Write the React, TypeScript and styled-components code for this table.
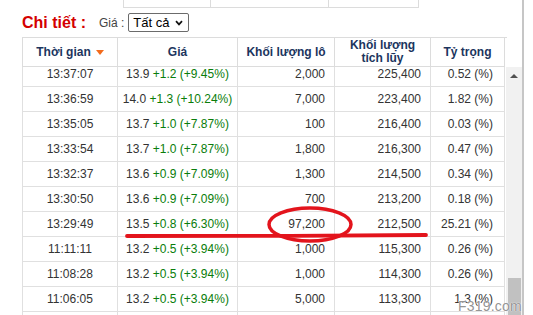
import React from 'react';
import styled, { createGlobalStyle } from 'styled-components';

const Global = createGlobalStyle`
  html, body { margin: 0; padding: 0; background: #fff; }
  body { font-family: "Liberation Sans", Arial, sans-serif; }
  * { box-sizing: border-box; }
`;

const Page = styled.div`
  position: relative;
  box-sizing: content-box;
  width: 500px;
  height: 315px;
  padding-left: 22px;
  border-right: 2px solid #c6c6c6;
  overflow: hidden;
  display: flex;
  flex-direction: column;
`;

const TopTable = styled.div`
  display: flex;
  margin-left: 101px;
  height: 8px;
  width: 296px;
  border-bottom: 1px solid #dcdcdc;
  flex: none;
`;

const TopCell = styled.div<{ $w: number; $last?: boolean }>`
  width: ${(p) => p.$w}px;
  border-left: 1px solid #dcdcdc;
  border-right: ${(p) => (p.$last ? '1px solid #dcdcdc' : 'none')};
`;

const TitleRow = styled.div`
  display: flex;
  align-items: center;
  height: 29px;
  flex: none;
`;

const Title = styled.span`
  font-size: 16px;
  font-weight: bold;
  color: #d40000;
`;

const FilterLabel = styled.span`
  margin-left: 13px;
  font-size: 12px;
  color: #444;
`;

const SelectBox = styled.label`
  margin-left: 4px;
  width: 61px;
  height: 19px;
  border: 1px solid #6b6b6b;
  border-radius: 2px;
  display: flex;
  align-items: center;
  padding-left: 4px;
  padding-right: 5px;
`;

const Select = styled.select`
  appearance: none;
  -webkit-appearance: none;
  border: none;
  background: transparent;
  outline: none;
  padding: 0;
  margin: 0;
  flex: 1;
  min-width: 0;
  font-family: "Liberation Sans", Arial, sans-serif;
  font-size: 13px;
  color: #000;
`;

const Grid = styled.div`
  flex: 1;
  min-height: 0;
  display: flex;
  flex-direction: column;
`;

const HeaderWrap = styled.div`
  width: 485px;
  border-top: 1px solid #dcdcdc;
  flex: none;
`;

const cols = '95px 120px 97px 96px 75px';

const HeaderRow = styled.div`
  display: grid;
  grid-template-columns: ${cols};
  height: 29px;
`;

const HeadCell = styled.div<{ $last?: boolean }>`
  border-left: 1px solid #dcdcdc;
  border-right: ${(p) => (p.$last ? '1px solid #dcdcdc' : 'none')};
  border-bottom: 1px solid #dcdcdc;
  display: flex;
  align-items: center;
  justify-content: center;
  gap: 5px;
  text-align: center;
  font-size: 12px;
  line-height: 13px;
  font-weight: bold;
  color: #1c355e;
`;

const SortArrow = styled.span`
  width: 0;
  height: 0;
  border-left: 4px solid transparent;
  border-right: 4px solid transparent;
  border-top: 5px solid #f26b1d;
  margin-top: 1px;
`;

const BodyArea = styled.div`
  flex: 1;
  min-height: 0;
  display: flex;
`;

const Viewport = styled.div`
  width: 483px;
  overflow: hidden;
`;

const BodyTable = styled.div<{ $scroll: number }>`
  margin-top: ${(p) => -p.$scroll}px;
`;

const Row = styled.div`
  display: grid;
  grid-template-columns: ${cols};
  height: 25px;
`;

const Cell = styled.div<{ $align: 'center' | 'right'; $last?: boolean }>`
  border-left: 1px solid #e0e0e0;
  border-right: ${(p) => (p.$last ? '1px solid #e0e0e0' : 'none')};
  border-bottom: 1px solid #e0e0e0;
  font-size: 12px;
  line-height: 24px;
  color: #333;
  white-space: nowrap;
  text-align: ${(p) => p.$align};
  padding-right: ${(p) => (p.$align === 'right' ? (p.$last ? '11px' : '9px') : '0')};
`;

const Change = styled.span`
  color: #0a7d0a;
`;

const Scrollbar = styled.div`
  width: 16px;
  margin-left: 1px;
  background: #f1f1f1;
  display: flex;
  flex-direction: column;
  align-items: center;
`;

const ScrollButton = styled.div`
  height: 17px;
  width: 100%;
  display: flex;
  align-items: center;
  justify-content: center;
`;

const UpArrow = styled.span`
  width: 0;
  height: 0;
  border-left: 4px solid transparent;
  border-right: 4px solid transparent;
  border-bottom: 4px solid #505050;
`;

const Thumb = styled.div<{ $top: number }>`
  margin-top: ${(p) => p.$top}px;
  width: 13px;
  flex: 1;
  background: #c1c1c1;
`;

const Watermark = styled.div`
  position: absolute;
  left: 458px;
  top: 298px;
  font-size: 14px;
  line-height: 16px;
  letter-spacing: 0.2px;
  color: rgba(120, 120, 120, 0.8);
  text-shadow: 0 0 1px #fff, 0 0 1px #fff;
  pointer-events: none;
`;

const Annotation = styled.svg`
  position: absolute;
  left: 0;
  top: 0;
  pointer-events: none;
`;

type R = [string, string, string, string, string, string, string];
const rows: R[] = [
  ['13:37:07', '13.9', '+1.2', '(+9.45%)', '2,000', '225,400', '0.52 (%)'],
  ['13:36:59', '14.0', '+1.3', '(+10.24%)', '7,000', '223,400', '1.82 (%)'],
  ['13:35:05', '13.7', '+1.0', '(+7.87%)', '100', '216,400', '0.03 (%)'],
  ['13:33:54', '13.7', '+1.0', '(+7.87%)', '1,800', '216,300', '0.47 (%)'],
  ['13:32:37', '13.6', '+0.9', '(+7.09%)', '1,300', '214,500', '0.34 (%)'],
  ['13:30:50', '13.6', '+0.9', '(+7.09%)', '700', '213,200', '0.18 (%)'],
  ['13:29:49', '13.5', '+0.8', '(+6.30%)', '97,200', '212,500', '25.21 (%)'],
  ['11:11:11', '13.2', '+0.5', '(+3.94%)', '1,000', '115,300', '0.26 (%)'],
  ['11:08:28', '13.2', '+0.5', '(+3.94%)', '1,000', '114,300', '0.26 (%)'],
  ['11:06:05', '13.2', '+0.5', '(+3.94%)', '5,000', '113,300', '1.3 (%)'],
];

export default function App() {
  return (
    <>
      <Global />
      <Page>
        <TopTable>
          <TopCell $w={87} />
          <TopCell $w={118} />
          <TopCell $w={91} $last />
        </TopTable>
        <TitleRow>
          <Title>Chi tiết :</Title>
          <FilterLabel>Giá :</FilterLabel>
          <SelectBox>
            <Select defaultValue="all">
              <option value="all">Tất cả</option>
            </Select>
            <svg width="8" height="6" viewBox="0 0 8 6">
              <path d="M1 1.2 L4 4.4 L7 1.2" fill="none" stroke="#111" strokeWidth="1.7" />
            </svg>
          </SelectBox>
        </TitleRow>
        <Grid>
          <HeaderWrap>
            <HeaderRow>
              <HeadCell>
                Thời gian <SortArrow />
              </HeadCell>
              <HeadCell>Giá</HeadCell>
              <HeadCell>Khối lượng lô</HeadCell>
              <HeadCell>
                Khối lượng
                <br />
                tích lũy
              </HeadCell>
              <HeadCell $last>Tỷ trọng</HeadCell>
            </HeaderRow>
          </HeaderWrap>
          <BodyArea>
            <Viewport>
              <BodyTable $scroll={5}>
                {rows.map((r) => (
                  <Row key={r[0]}>
                    <Cell $align="center">{r[0]}</Cell>
                    <Cell $align="center">
                      {r[1]} <Change>{r[2]} {r[3]}</Change>
                    </Cell>
                    <Cell $align="right">{r[4]}</Cell>
                    <Cell $align="right">{r[5]}</Cell>
                    <Cell $align="right" $last>
                      {r[6]}
                    </Cell>
                  </Row>
                ))}
                <Row>
                  <Cell $align="center" />
                  <Cell $align="center" />
                  <Cell $align="right" />
                  <Cell $align="right" />
                  <Cell $align="right" $last />
                </Row>
              </BodyTable>
            </Viewport>
            <Scrollbar>
              <ScrollButton>
                <UpArrow />
              </ScrollButton>
              <Thumb $top={194} />
            </Scrollbar>
          </BodyArea>
        </Grid>
        <Watermark>F319.com</Watermark>
        <Annotation width="524" height="315" viewBox="0 0 524 315">
          <ellipse cx="310" cy="224.5" rx="41" ry="16.5" fill="none" stroke="#e3141c" strokeWidth="3.5" />
          <path
            d="M127 236 C 220 236.5, 330 235.5, 426 235"
            fill="none"
            stroke="#e3141c"
            strokeWidth="3.8"
            strokeLinecap="round"
          />
        </Annotation>
      </Page>
    </>
  );
}
